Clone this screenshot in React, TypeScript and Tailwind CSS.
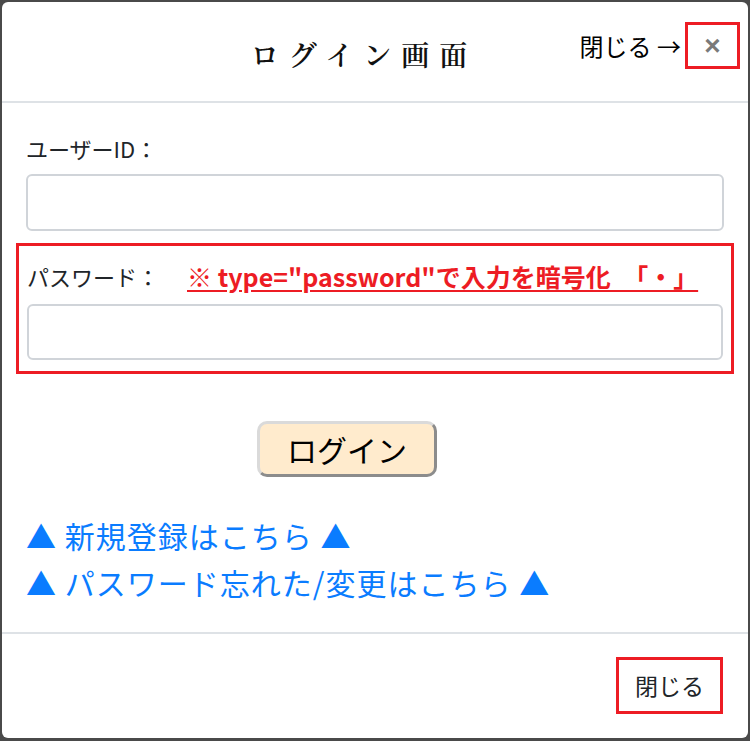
export default function App() {
  const sans = "font-['Noto_Sans_CJK_JP','Noto_Sans',sans-serif]";

  return (
    <div className={`w-[750px] h-[741px] bg-[#4a4a4a] pl-[2px] pt-[2px] ${sans}`}>
      <div className="w-[746px] h-[736px] bg-white rounded-[6px] flex flex-col overflow-hidden">
        {/* header */}
        <div className="h-[101px] shrink-0 border-b-2 border-[#dee2e6] grid grid-cols-[1fr_auto_1fr] items-start">
          <div />
          <h1 className="mt-[32px] mr-[22px] text-[28px] leading-[40px] tracking-[10px] font-semibold text-[#111] font-['Noto_Serif_CJK_JP','Liberation_Serif',serif]">
            ログイン画面
          </h1>
          <div className="flex justify-end items-center pt-[20px] pr-[8px]">
            <span className="text-[24px] leading-[30px] text-black mr-[4px] whitespace-nowrap">閉じる →</span>
            <button className="w-[55px] h-[47px] border-[3px] border-[#ed1c24] flex items-center justify-center text-[28px] font-bold text-[#7a7a7a] leading-none font-['Liberation_Sans',sans-serif]">
              ×
            </button>
          </div>
        </div>

        {/* body */}
        <div className="flex-1 px-[14px] pt-[31px]">
          <div className="px-[10px]">
            <label className="block text-[22px] leading-[28px] text-[#212529] mb-[12px]">
              ユーザーID：
            </label>
            <input
              type="text"
              className="block w-full h-[57px] border-2 border-[#d0d4d9] rounded-[6px] outline-none"
            />
          </div>

          <div className="mt-[12px] border-[3px] border-[#ed1c24] px-[8px] pt-[16px] pb-[11px]">
            <div className="flex items-center mb-[14px]">
              <label className="text-[22px] leading-[28px] text-[#212529] w-[160px] shrink-0">
                パスワード：
              </label>
              <span className="text-[25px] leading-[28px] font-bold text-[#ed1c24] underline underline-offset-[3px] whitespace-nowrap">
                ※ type="password"で入力を暗号化　「・」
              </span>
            </div>
            <input
              type="password"
              className="block w-full h-[56px] border-2 border-[#d0d4d9] rounded-[6px] outline-none"
            />
          </div>

          <div className="flex justify-center mt-[47px] pr-[56px]">
            <button className="w-[180px] h-[56px] bg-[#ffebcd] rounded-[10px] border-[3px] border-t-[#dadada] border-l-[#dadada] border-r-[#8c8c8c] border-b-[#8c8c8c] text-[30px] leading-none text-black">
              ログイン
            </button>
          </div>

          <div className="mt-[36px] px-[10px] flex flex-col gap-[3px] text-[#0a7cff] text-[30px] leading-[44px] tracking-[1px]">
            <a href="#">▲ 新規登録はこちら ▲</a>
            <a href="#">▲ パスワード忘れた/変更はこちら ▲</a>
          </div>
        </div>

        {/* footer */}
        <div className="h-[106px] shrink-0 border-t-2 border-[#dee2e6] flex items-start justify-end pt-[23px] pr-[25px]">
          <button className="w-[107px] h-[57px] border-[3px] border-[#ed1c24] text-[23px] text-[#212529]">
            閉じる
          </button>
        </div>
      </div>
    </div>
  );
}
